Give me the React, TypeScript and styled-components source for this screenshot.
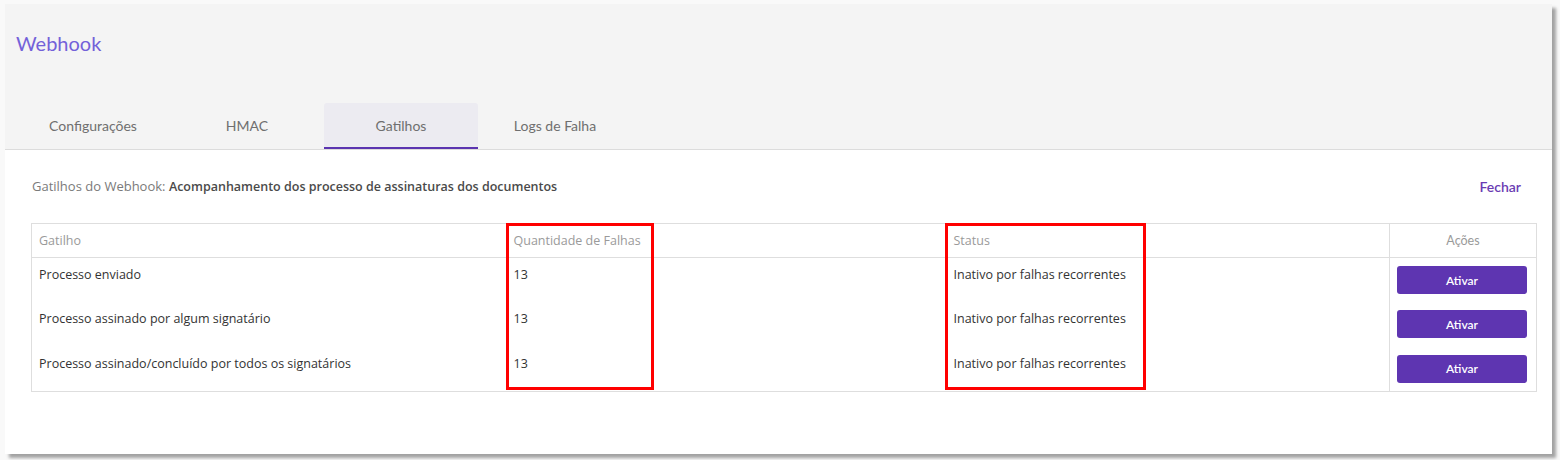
import React from 'react';
import styled, { createGlobalStyle } from 'styled-components';

const GlobalStyle = createGlobalStyle`
  html, body {
    margin: 0;
    padding: 0;
    background: #ffffff;
  }
  body {
    font-family: "Open Sans", "Liberation Sans", sans-serif;
  }
`

const Page = styled.div`
  width: 1560px;
  height: 460px;
  padding: 4px 8px 6px 5px;
  box-sizing: border-box;
  background: #f9f9f9;
`

const Card = styled.div`
  height: 450px;
  background: #ffffff;
  box-shadow: 4px 4px 3px rgba(0, 0, 0, 0.35);
  display: flex;
  flex-direction: column;
`

const Header = styled.div`
  background: #f4f4f4;
  border-bottom: 1px solid #dcdcdc;
  padding: 27px 10px 0 11px;
`

const Title = styled.h1`
  margin: 0;
  font-family: Lato, "Noto Sans", sans-serif;
  font-weight: 400;
  font-size: 20px;
  line-height: 24px;
  color: #7361d9;
`

const Tabs = styled.div`
  display: flex;
  margin-top: 48px;
`

const Tab = styled.div<{ $active?: boolean }>`
  width: 154px;
  height: 46px;
  box-sizing: border-box;
  display: flex;
  align-items: center;
  justify-content: center;
  font-family: Lato, "Noto Sans", sans-serif;
  font-size: 14px;
  color: #6f6f6f;
  border-radius: 3px 3px 0 0;
  background: ${({ $active }) => ($active ? '#ecebf1' : 'transparent')};
  border-bottom: 2px solid ${({ $active }) => ($active ? '#5b34b0' : 'transparent')};
`

const Body = styled.div`
  padding: 27px 16px 0 26px;
`

const TopLine = styled.div`
  display: flex;
  justify-content: space-between;
  align-items: center;
  padding-left: 1px;
  padding-right: 15px;
`

const Caption = styled.div`
  font-size: 13px;
  color: #7a7a7a;

  strong {
    color: #4a4a4a;
    font-size: 12.5px;
    font-weight: 600;
  }
`

const CloseLink = styled.a`
  font-family: Lato, "Noto Sans", sans-serif;
  font-size: 14px;
  font-weight: 600;
  color: #6a3bb3;
  cursor: pointer;
`

const TableWrap = styled.div`
  position: relative;
  margin-top: 28px;
`

const Table = styled.table`
  width: 1505px;
  border-collapse: collapse;
  border: 1px solid #dedede;
  table-layout: fixed;
`

const Th = styled.th<{ $center?: boolean; $divider?: boolean }>`
  height: 33px;
  padding: 0 7px;
  font-weight: 400;
  font-size: 12.5px;
  color: #9a9a9a;
  text-align: ${({ $center }) => ($center ? 'center' : 'left')};
  border-bottom: 1px solid #dedede;
  border-left: ${({ $divider }) => ($divider ? '1px solid #dedede' : 'none')};
  font-family: ${({ $center }) => ($center ? 'Lato, "Noto Sans", sans-serif' : 'inherit')};
`

const Td = styled.td<{ $divider?: boolean }>`
  height: 44.5px;
  padding: 7px 7px 0 7px;
  box-sizing: border-box;
  vertical-align: top;
  font-size: 12.5px;
  line-height: 20px;
  color: #333333;
  border-left: ${({ $divider }) => ($divider ? '1px solid #dedede' : 'none')};
`

const ActionTd = styled(Td)`
  padding: 8px 7px 0 7px;
`

const ActivateButton = styled.button`
  width: 130px;
  height: 28px;
  border: none;
  border-radius: 3px;
  background: #5e35b1;
  color: #ffffff;
  font-family: Lato, "Noto Sans", sans-serif;
  font-size: 12px;
  font-weight: 600;
  cursor: pointer;
  display: block;
`

const Highlight = styled.div<{ $left: number; $width: number }>`
  position: absolute;
  top: 0;
  left: ${({ $left }) => $left}px;
  width: ${({ $width }) => $width}px;
  height: 167px;
  border: 3px solid #ff0000;
  box-sizing: border-box;
  pointer-events: none;
`

const triggers = [
  'Processo enviado',
  'Processo assinado por algum signatário',
  'Processo assinado/concluído por todos os signatários',
]

const tabs = ['Configurações', 'HMAC', 'Gatilhos', 'Logs de Falha']

export default function App() {
  return (
    <>
      <GlobalStyle />
      <Page>
        <Card>
          <Header>
            <Title>Webhook</Title>
            <Tabs>
              {tabs.map((t) => (
                <Tab key={t} $active={t === 'Gatilhos'}>{t}</Tab>
              ))}
            </Tabs>
          </Header>
          <Body>
            <TopLine>
              <Caption>
                Gatilhos do Webhook: <strong>Acompanhamento dos processo de assinaturas dos documentos</strong>
              </Caption>
              <CloseLink>Fechar</CloseLink>
            </TopLine>
            <TableWrap>
              <Table>
                <colgroup>
                  <col style={{ width: 475 }} />
                  <col style={{ width: 440 }} />
                  <col style={{ width: 443 }} />
                  <col style={{ width: 147 }} />
                </colgroup>
                <thead>
                  <tr>
                    <Th>Gatilho</Th>
                    <Th>Quantidade de Falhas</Th>
                    <Th>Status</Th>
                    <Th $center $divider>Ações</Th>
                  </tr>
                </thead>
                <tbody>
                  {triggers.map((name) => (
                    <tr key={name}>
                      <Td>{name}</Td>
                      <Td>13</Td>
                      <Td>Inativo por falhas recorrentes</Td>
                      <ActionTd $divider>
                        <ActivateButton>Ativar</ActivateButton>
                      </ActionTd>
                    </tr>
                  ))}
                </tbody>
              </Table>
              {/* annotation boxes over the screenshot */}
              <Highlight $left={475} $width={148} />
              <Highlight $left={914} $width={201} />
            </TableWrap>
          </Body>
        </Card>
      </Page>
    </>
  )
}
